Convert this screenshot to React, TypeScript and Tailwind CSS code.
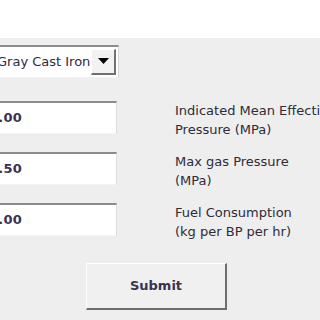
import React from "react";

const font = { fontFamily: '"DejaVu Sans", Verdana, sans-serif' };

function Field({ value }: { value: string }) {
  return (
    <div className="w-[117px] h-[33px] shrink-0 bg-white border-t-2 border-t-[#8c8c8c] border-r border-r-[#dcdcdc] border-b border-b-[#f4f4f4] flex items-center overflow-hidden">
      <span className="ml-[-11px] text-[13px] font-semibold text-[#3a3350] tracking-[0.2px]">{value}</span>
    </div>
  );
}

function Label({ l1, l2 }: { l1: string; l2: string }) {
  return (
    <div className="text-[13px] leading-[19px] text-[#2f2b38] whitespace-nowrap">
      <div>{l1}</div>
      <div>{l2}</div>
    </div>
  );
}

export default function App() {
  return (
    <div className="w-[320px] h-[320px] bg-[#eeeeee] overflow-hidden flex flex-col" style={font}>
      <div className="h-[38px] bg-white shrink-0" />
      <div className="mt-[7px] flex">
        <div className="w-[119px] h-[33px] bg-white border-t-2 border-t-[#8c8c8c] border-r border-r-[#d8d8d8] border-b border-b-[#f2f2f2] flex items-center overflow-hidden">
          <span className="ml-[-3px] text-[13px] text-[#2f2b38] whitespace-nowrap flex-1">Gray Cast Iron</span>
          <div className="w-[25px] h-[26px] mr-[2px] bg-[#f2f2f2] border-t border-l border-t-white border-l-white border-r-2 border-b-2 border-r-[#707070] border-b-[#707070] flex items-center justify-center">
            <svg width="11" height="7" viewBox="0 0 11 7">
              <polygon points="0,0 11,0 5.5,6" fill="#000" />
            </svg>
          </div>
        </div>
      </div>
      <div className="mt-[23px] flex flex-col gap-[18px]">
        <div className="flex h-[33px] gap-[58px] items-start">
          <Field value="1.00" />
          <Label l1="Indicated Mean Effective" l2="Pressure (MPa)" />
        </div>
        <div className="flex h-[33px] gap-[58px] items-start">
          <Field value="1.50" />
          <Label l1="Max gas Pressure" l2="(MPa)" />
        </div>
        <div className="flex h-[33px] gap-[58px] items-start">
          <Field value="1.00" />
          <Label l1="Fuel Consumption" l2="(kg per BP per hr)" />
        </div>
      </div>
      <div className="mt-[27px] flex">
        <button className="ml-[86px] w-[141px] h-[47px] bg-[#f0f0f0] border-t border-l border-t-white border-l-white border-r-2 border-b-2 border-r-[#6e6e6e] border-b-[#6e6e6e] text-[13px] font-semibold text-[#3a3350]" style={font}>
          Submit
        </button>
      </div>
    </div>
  );
}
